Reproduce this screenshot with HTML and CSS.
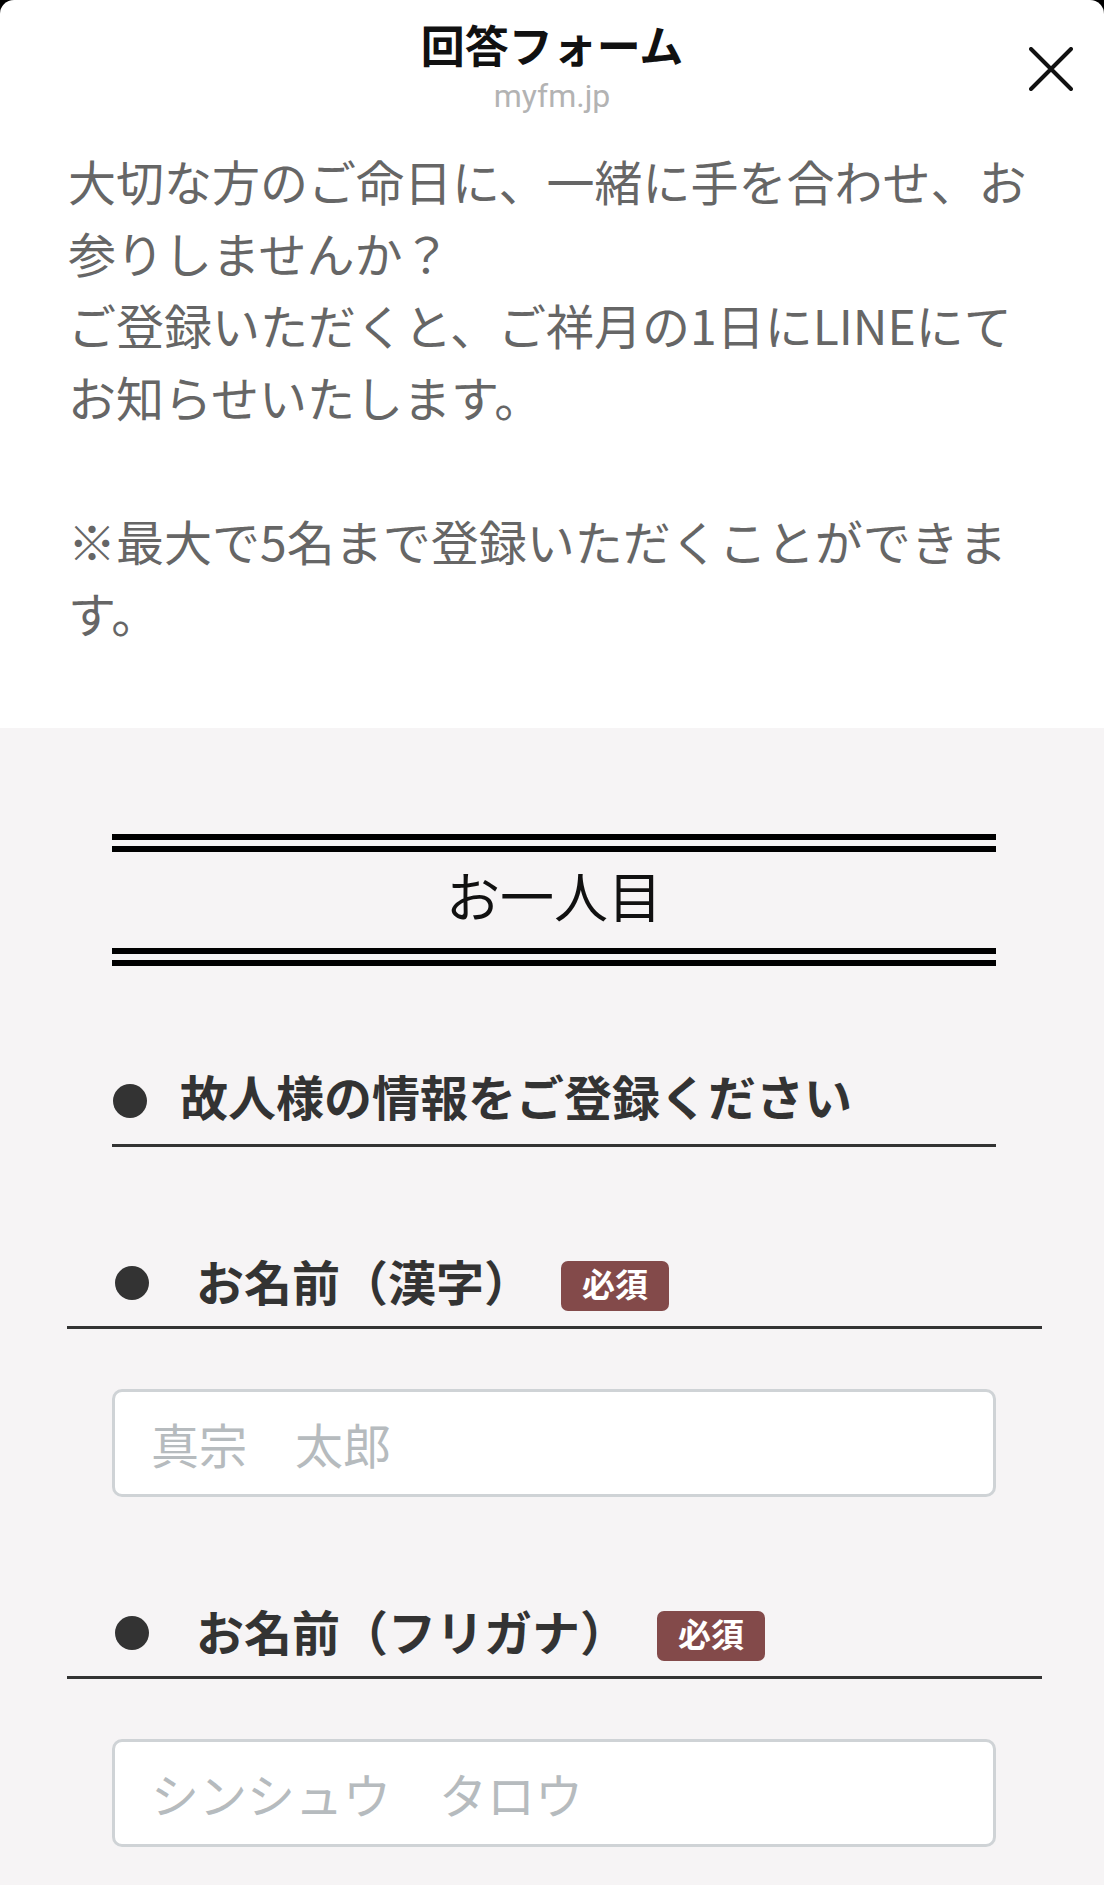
FILE: index.html
```html
<!DOCTYPE html>
<html lang="ja">
<head>
<meta charset="utf-8">
<title>回答フォーム</title>
<link rel="stylesheet" href="styles.css">
</head>
<body>
<div class="sheet">
  <header class="sheet-header">
    <h1 class="title">回答フォーム</h1>
    <div class="domain">myfm.jp</div>
    <button class="close" type="button" aria-label="閉じる">
      <svg viewBox="0 0 44 44" width="44" height="44"><path d="M2 2 L42 42 M42 2 L2 42" stroke="#111" stroke-width="4" stroke-linecap="round" fill="none"/></svg>
    </button>
  </header>
  <section class="intro">
    <p>大切な方のご命日に、一緒に手を合わせ、お参りしませんか？<br>ご登録いただくと、ご祥月の1日にLINEにてお知らせいたします。<br><br>※最大で5名まで登録いただくことができます。</p>
  </section>
  <section class="form">
    <div class="person-head">お一人目</div>
    <div class="section-title"><span class="dot dot-lg"></span><span>故人様の情報をご登録ください</span></div>

    <div class="field-label"><span class="dot"></span><span class="label-text">お名前（漢字）</span><span class="badge">必須</span></div>
    <div class="input-wrap"><input class="text-input" type="text" placeholder="真宗　太郎"></div>

    <div class="field-label"><span class="dot"></span><span class="label-text">お名前（フリガナ）</span><span class="badge">必須</span></div>
    <div class="input-wrap"><input class="text-input" type="text" placeholder="シンシュウ　タロウ"></div>
  </section>
</div>
</body>
</html>
```

FILE: styles.css
```css
html, body {
  margin: 0;
  padding: 0;
  background: #000;
}
body {
  font-family: "Noto Sans CJK JP", sans-serif;
}
.sheet {
  background: #fff;
  border-radius: 14px 14px 0 0;
  overflow: hidden;
  min-height: 1885px;
  display: flex;
  flex-direction: column;
}
.sheet-header {
  position: relative;
  padding-top: 16px;
  text-align: center;
}
.title {
  margin: 0;
  font-size: 44px;
  line-height: 56px;
  font-weight: 700;
  color: #111;
}
.domain {
  margin-top: 6px;
  font-family: Roboto, "Liberation Sans", sans-serif;
  font-size: 32px;
  line-height: 36px;
  color: #b3b3b3;
}
.close {
  position: absolute;
  top: 47px;
  right: 31px;
  width: 44px;
  height: 44px;
  padding: 0;
  border: 0;
  background: transparent;
}
.close svg {
  display: block;
}
.intro {
  padding: 30px 68px 80px;
}
.intro p {
  margin: 0;
  font-size: 48px;
  line-height: 72px;
  color: #666;
}
.form {
  flex: 1;
  background: #f6f4f5;
  padding: 106px 62px 36px 67px;
}
.person-head {
  margin: 0 46px 0 45px;
  border-top: 18px double #000;
  border-bottom: 18px double #000;
  font-size: 54px;
  line-height: 86px;
  padding-bottom: 10px;
  text-align: center;
  color: #111;
}
.section-title {
  margin: 93px 46px 0 45px;
  display: flex;
  align-items: center;
  padding-bottom: 13px;
  border-bottom: 3px solid #333;
  font-size: 48px;
  line-height: 72px;
  font-weight: 700;
  color: #333;
}
.dot {
  flex: none;
  width: 34px;
  height: 34px;
  border-radius: 50%;
  background: #333;
  margin-right: 47px;
}
.dot-lg {
  margin-left: 1px;
  margin-right: 33px;
  margin-top: 12px;
}
.field-label {
  margin-top: 108px;
  display: flex;
  align-items: center;
  height: 56px;
  padding-left: 48px;
  padding-bottom: 15px;
  border-bottom: 3px solid #333;
}
.label-text {
  font-size: 48px;
  line-height: 56px;
  font-weight: 700;
  color: #333;
  padding-bottom: 6px;
}
.badge {
  margin-left: 29px;
  width: 108px;
  height: 44px;
  padding-bottom: 6px;
  border-radius: 7px;
  background: #834a4a;
  color: #fff;
  font-size: 33px;
  line-height: 44px;
  font-weight: 700;
  text-align: center;
  margin-top: 6px;
}
.input-wrap {
  margin: 60px 46px 0 45px;
}
.text-input {
  display: block;
  box-sizing: border-box;
  width: 100%;
  height: 108px;
  margin: 0;
  padding: 0 36px;
  border: 3px solid #cfd3d6;
  border-radius: 10px;
  background: #fff;
  font-family: "Noto Sans CJK JP", sans-serif;
  font-size: 48px;
  color: #333;
  outline: none;
}
.text-input::placeholder {
  color: #b6bbbe;
  opacity: 1;
}
```
